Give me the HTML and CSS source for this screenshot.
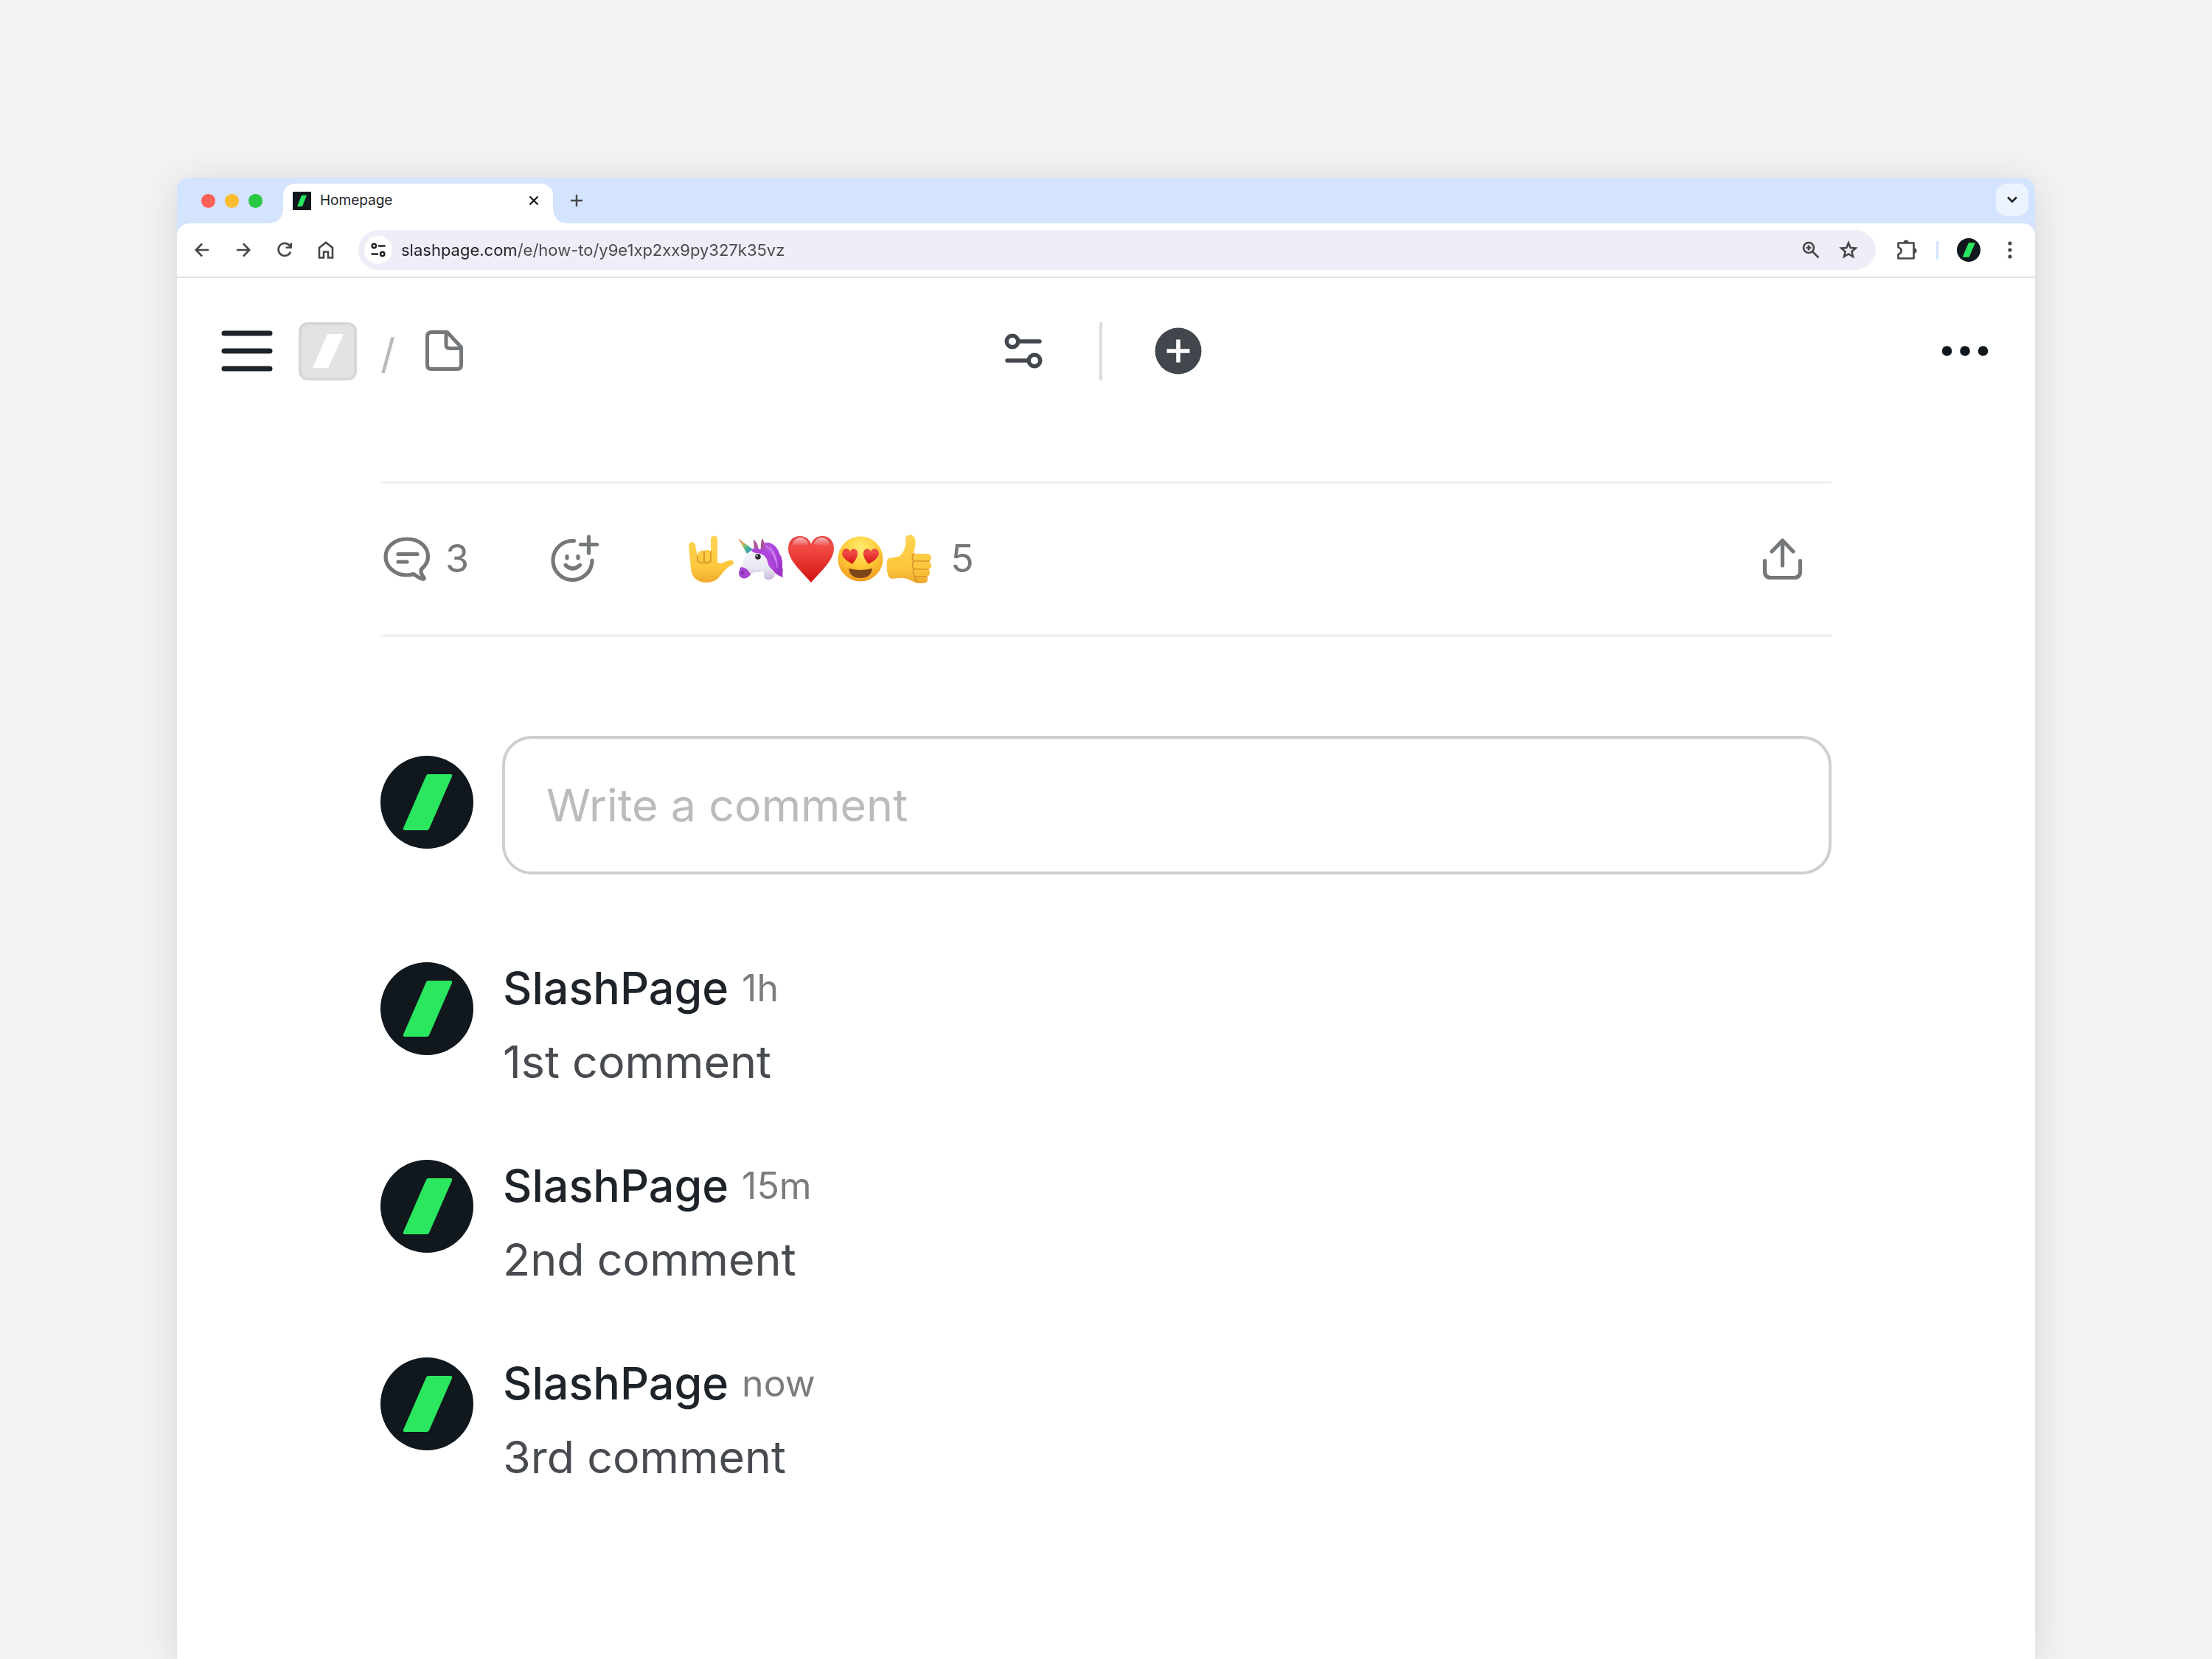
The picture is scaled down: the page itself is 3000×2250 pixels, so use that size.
FILE: index.html
```html
<!DOCTYPE html>
<html lang="en">
<head>
<meta charset="utf-8">
<title>Homepage</title>
<link rel="stylesheet" href="styles.css">
</head>
<body>
<svg class="sprite" aria-hidden="true">
  <defs>
    <linearGradient id="skin" x1="0" y1="0" x2="0" y2="1"><stop offset="0" stop-color="#ffd452"/><stop offset=".7" stop-color="#fdc63c"/><stop offset="1" stop-color="#efa92f"/></linearGradient>
    <linearGradient id="red" x1="0" y1="0" x2="0" y2="1"><stop offset="0" stop-color="#e5403e"/><stop offset=".25" stop-color="#f24a46"/><stop offset="1" stop-color="#d3120f"/></linearGradient>
    <linearGradient id="gloss" x1="0" y1="0" x2="0" y2="1"><stop offset="0" stop-color="#fff" stop-opacity=".65"/><stop offset="1" stop-color="#fff" stop-opacity="0"/></linearGradient>
    <linearGradient id="horn" x1="0" y1="0" x2="1" y2="1"><stop offset="0" stop-color="#e8706a"/><stop offset=".35" stop-color="#d9b65a"/><stop offset=".6" stop-color="#43b98c"/><stop offset="1" stop-color="#3f7fe0"/></linearGradient>
    <linearGradient id="mane" x1="0" y1="0" x2="1" y2="1"><stop offset="0" stop-color="#b956e8"/><stop offset="1" stop-color="#9a2fc6"/></linearGradient>
    <linearGradient id="coat" x1="0" y1="0" x2="0" y2="1"><stop offset="0" stop-color="#f6f6fb"/><stop offset=".6" stop-color="#e9e8f3"/><stop offset="1" stop-color="#c9b8da"/></linearGradient>
    <radialGradient id="face" cx=".5" cy=".25" r=".8"><stop offset="0" stop-color="#ffec6e"/><stop offset=".5" stop-color="#ffcb38"/><stop offset="1" stop-color="#f0941c"/></radialGradient>
  </defs>
  <symbol id="logo" viewBox="0 0 126 126"><circle cx="63" cy="63" r="63" fill="#10171d"/><path d="M65 25H95Q98 25 97 28L66 99Q65 101 63 101H33Q30 101 31 98L62 27Q63 25 65 25Z" fill="#2ae75f"/></symbol>
</svg>

<main class="window">
  <header class="tabstrip">
    <div class="lights"><i class="light red"></i><i class="light amber"></i><i class="light green"></i></div>
    <div class="tab">
      <svg class="favicon" viewBox="0 0 25 25"><path d="M0 0h25v25H0z" fill="#10171d"/><path d="M12 5h7l-6 15H6z" fill="#2ae75f"/></svg>
      <span class="tab-title">Homepage</span>
      <button class="plain tab-close" aria-label="Close tab"><svg width="14" height="14" viewBox="0 0 14 14" fill="none" stroke="#1f2023" stroke-width="2.400"><path d="M1.500 1.500l11 11M12.500 1.500l-11 11"/></svg></button>
    </div>
    <button class="plain tab-new" aria-label="New tab"><svg width="18" height="18" viewBox="0 0 18 18" fill="none" stroke="#474747" stroke-width="2.400"><path d="M9 1v16M1 9h16"/></svg></button>
    <button class="plain tab-search" aria-label="Search tabs"><svg width="16" height="12" viewBox="0 0 16 12" fill="none" stroke="#1f2023" stroke-width="2.600"><path d="M2 2.500l6 6 6-6"/></svg></button>
  </header>

  <div class="toolbar">
    <nav class="nav">
      <button class="plain tool" aria-label="Back"><svg width="20" height="20" viewBox="0 0 20 20" fill="none" stroke="#474747" stroke-width="2.600"><path d="M19 10H2M10 1.500L1.800 10l8.200 8.500"/></svg></button>
      <button class="plain tool" aria-label="Forward"><svg width="20" height="20" viewBox="0 0 20 20" fill="none" stroke="#474747" stroke-width="2.600"><path d="M1 10h17M10 1.500l8.200 8.500-8.200 8.500"/></svg></button>
      <button class="plain tool" aria-label="Reload"><svg width="22" height="22" viewBox="0 0 22 22" fill="none" stroke="#474747" stroke-width="2.600"><path d="M18.500 6.200A8.500 8.500 0 1 0 19 13.500M19.700 1.500v6.300h-7"/></svg></button>
      <button class="plain tool" aria-label="Home"><svg width="22" height="24" viewBox="0 0 22 24" fill="none" stroke="#474747" stroke-width="2.600"><path d="M2 9l9-7 9 7v13.500h-6v-8H8v8H2z"/></svg></button>
    </nav>
    <div class="address">
      <button class="plain site-info" aria-label="View site information"><svg width="20" height="20" viewBox="0 0 20 20" fill="none" stroke="#1f2023" stroke-width="2.400"><circle cx="4.300" cy="4.500" r="2.700"/><circle cx="15.700" cy="15.500" r="2.700"/><path d="M10 4.500h9.500M.5 15.500H10"/></svg></button>
      <input class="url" type="text" aria-label="Address" value="slashpage.com/e/how-to/y9e1xp2xx9py327k35vz">
      <button class="plain pill-tool" aria-label="Zoom"><svg width="24" height="24" viewBox="0 0 24 24" fill="none" stroke="#474747" stroke-width="2.600"><circle cx="9" cy="9" r="7"/><path d="M14 14l8.500 8.500M9 5.500v7M5.500 9h7"/></svg></button>
      <button class="plain pill-tool" aria-label="Bookmark"><svg width="26" height="26" viewBox="0 0 26 26" fill="none" stroke="#474747" stroke-width="2.600"><path d="M13 3.500l2.700 6.500 7 .6-5.300 4.600 1.600 6.800-6-3.600-6 3.600 1.600-6.800-5.300-4.600 7-.6z"/></svg></button>
    </div>
    <button class="plain tool" aria-label="Extensions"><svg width="28" height="28" viewBox="0 0 28 28" fill="none" stroke="#474747" stroke-width="2.600" stroke-linejoin="round"><path d="M2.500 4.500H23.500V25.500H2.500V20C8 18 8 12 2.500 10.500Z"/><path d="M9.500 4a3.500 3.500 0 0 1 7 0zM24 11.500a3.500 3.500 0 0 1 0 7z" fill="#474747" stroke="none"/></svg></button>
    <span class="tool-divider"></span>
    <button class="plain profile" aria-label="Profile"><svg width="32" height="32"><use href="#logo"/></svg></button>
    <button class="plain tool" aria-label="Browser menu"><svg width="6" height="24" viewBox="0 0 6 24" fill="#474747"><circle cx="3" cy="3" r="2.600"/><circle cx="3" cy="12" r="2.600"/><circle cx="3" cy="21" r="2.600"/></svg></button>
  </div>

  <div class="appbar">
    <div class="crumbs">
      <button class="plain" aria-label="Menu"><svg width="70" height="56" viewBox="0 0 70 56" fill="none" stroke="#1d2329" stroke-width="7" stroke-linecap="round"><path d="M4 4h62M4 28h62M4 52h62"/></svg></button>
      <a class="site-logo" href="#" aria-label="Site"><svg width="42" height="46" viewBox="0 0 42 46"><path d="M20 0H42L21 46H0Z" fill="#fff"/></svg></a>
      <span class="slash">/</span>
      <a class="page-link" href="#" aria-label="Page"><svg width="54" height="58" viewBox="0 0 54 58" fill="none" stroke="#75787a" stroke-width="5" stroke-linejoin="round"><path d="M9.500 3.500H30.500L49.500 24V48Q49.500 53.500 44 53.500H9Q3.500 53.500 3.500 48V9.500Q3.500 3.500 9.500 3.500Z"/><path d="M29 4v16.500Q29 25.500 34 25.500H49"/></svg></a>
    </div>
    <div class="actions">
      <button class="plain round" aria-label="Settings"><svg width="52" height="48" viewBox="0 0 52 48" fill="none" stroke="#42474d" stroke-width="5.400" stroke-linecap="round"><circle cx="11" cy="11" r="7.800"/><path d="M21 11h27M4 37h27"/><circle cx="41" cy="37" r="7.800"/></svg></button>
      <span class="divider"></span>
      <button class="plain round" aria-label="Add"><svg width="64" height="64" viewBox="0 0 64 64"><circle cx="32" cy="32" r="31.500" fill="#42474d"/><path d="M32 16.500v31M16.500 32h31" stroke="#fff" stroke-width="5.600"/></svg></button>
    </div>
    <button class="plain more" aria-label="More"><svg width="64" height="16" viewBox="0 0 64 16" fill="#10171d"><circle cx="7.500" cy="8" r="6.800"/><circle cx="32" cy="8" r="6.800"/><circle cx="56.500" cy="8" r="6.800"/></svg></button>
  </div>

  <section class="content">
    <div class="reactions">
      <button class="plain count"><svg width="64" height="62" viewBox="0 0 64 62" fill="none" stroke="#75787a" stroke-width="5.200" stroke-linecap="round" stroke-linejoin="round"><path d="M41 51.500C38 52.500 35 53 32 53C16 53 3 42 3 28S16 4 32 4S60.500 14 60.500 28C60.500 35 56 41 51.500 45C50 49 52 53 55 56.500Q56 58.500 53.500 58.300C49 57.500 45 54.500 41 51.500Z"/><path d="M20 24.500h26M20 35h12"/></svg>3</button>
      <button class="plain" aria-label="Add reaction"><svg width="66" height="66" viewBox="0 0 66 66" fill="none" stroke="#75787a" stroke-width="5.200" stroke-linecap="round"><path d="M31.500 8.600A26.500 26.500 0 1 0 56 35"/><path d="M51.500 3v22M40.500 13.500h22M22 29.500v2.500M37 29.500v2.500"/><path d="M20 41.500Q29.500 50.500 39.500 41.500"/></svg></button>
      <button class="plain emojis" aria-label="5 reactions">
        <svg class="emoji" viewBox="0 0 64 68"><path d="M0 16C0 10 8 9 9 15L12 31C12 24 16 22 21 23Q26 20 30 24V7C30 1 39 1 39 7V39C44 42 50 37 55 36C61 35 63 40 59 42C51 46 47 52 42 58C37 64 31 66 24 66C11 66 3 58 3 46Z" fill="url(#skin)"/><path d="M12 30v6q4 6 9 2 4 4 9-1V24M21 24v13" fill="none" stroke="#d9952b" stroke-width="1.800" stroke-linecap="round"/></svg>
        <svg class="emoji" viewBox="0 0 64 68"><path d="M36 12C46 10 54 18 56 27C61 33 60 41 60 46C62 51 59 54 61 59C54 57 49 52 44 47L30 26Z" fill="url(#mane)"/><path d="M11 29C16 22 26 20 33 24C40 28 44 36 41 42C44 48 52 51 50 57C47 62 41 64 37 61C34 58 36 53 34 51C28 53 23 50 17 55C13 62 2 61 1 53C0 49 4 45 6 40C8 36 9 32 11 29Z" fill="url(#coat)"/><path d="M4 45Q12 45 17 55Q13 62 5 60Q-1 56 2 49Z" fill="#a743cf"/><path d="M0 6L20 21L12 27Z" fill="url(#horn)"/><path d="M22 24L21 8Q27 11 28 24ZM31 24Q30 11 33 6Q38 15 36 26Z" fill="#ad5598"/><path d="M18 23Q22 16 29 21Q34 18 38 24Q46 27 46 37Q51 42 49 49Q42 46 40 38Q38 28 27 26Q22 27 18 23Z" fill="#ae45db"/><path d="M43 18q9 9 10 27M38 17q8 4 14 22" fill="none" stroke="#d184f2" stroke-width="1.500" stroke-linecap="round"/><circle cx="27" cy="31" r="3.800" fill="#25252e"/><circle cx="26" cy="30" r="1" fill="#fff"/><ellipse cx="6" cy="53" rx="1.500" ry="2.200" fill="#74268d"/></svg>
        <svg class="emoji" viewBox="0 0 64 68"><path d="M32 66C19 51 1 36 1 20C1 8 9 3 17 3C25 3 30 8 32 14C34 8 39 3 47 3C56 3 63 9 63 20C63 36 45 51 32 66Z" fill="url(#red)"/><path d="M17 5C23 5 27 9 29 14Q20 19 6 16Q8 6 17 5ZM47 5C41 5 37 9 35 14Q44 19 58 16Q56 6 47 5Z" fill="url(#gloss)"/></svg>
        <svg class="emoji" viewBox="0 0 64 68"><circle cx="32" cy="34" r="30.500" fill="url(#face)"/><path d="M21 41C14 37 8 33 7 27C7 19 16 18 18 24C21 18 29 20 28 28C27 34 24 37 21 41Z" fill="url(#red)"/><path d="M43 41C50 37 56 33 57 27C57 19 48 18 46 24C43 18 35 20 36 28C37 34 40 37 43 41Z" fill="url(#red)"/><path d="M16 47Q32 51 48 47Q46 60 32 60Q18 60 16 47Z" fill="#7d4518"/></svg>
        <svg class="emoji" viewBox="0 0 64 68"><path d="M2 34C8 31 17 33 21 27C26 21 27 13 26 6C28-1 37 0 39 7C41 15 38 21 37 27H55C62 27 63 35 58 38C63 41 62 47 57 48C61 52 59 57 55 58C58 62 55 67 50 67H43C36 66 33 61 23 60C15 59 8 63 4 59C0 53 0 39 2 34Z" fill="url(#skin)"/><path d="M38 27Q33 30 37 37H58M37 37Q34 43 37 48H57M37 48Q35 54 39 58H55M39 58Q38 63 43 66" fill="none" stroke="#d9952b" stroke-width="1.700" stroke-linecap="round"/></svg>
        <span class="total">5</span>
      </button>
      <button class="plain share" aria-label="Share"><svg width="55" height="58" viewBox="0 0 55 58" fill="none" stroke="#75787a" stroke-width="5.200" stroke-linecap="round" stroke-linejoin="round"><path d="M27.500 38V4M13 19L27.500 4L42 19M3.500 31.500V46Q3.500 54.500 12 54.500H43Q51.500 54.500 51.500 46V31.500"/></svg></button>
    </div>

    <form class="composer">
      <svg class="avatar"><use href="#logo"/></svg>
      <input class="comment-box" type="text" placeholder="Write a comment" aria-label="Write a comment">
    </form>

    <div class="comments">
      <article class="comment">
        <svg class="avatar"><use href="#logo"/></svg>
        <div><p class="byline"><strong class="author">SlashPage</strong><time class="time">1h</time></p><p class="text">1st comment</p></div>
      </article>
      <article class="comment">
        <svg class="avatar"><use href="#logo"/></svg>
        <div><p class="byline"><strong class="author">SlashPage</strong><time class="time">15m</time></p><p class="text">2nd comment</p></div>
      </article>
      <article class="comment">
        <svg class="avatar"><use href="#logo"/></svg>
        <div><p class="byline"><strong class="author">SlashPage</strong><time class="time">now</time></p><p class="text">3rd comment</p></div>
      </article>
    </div>
  </section>
</main>
</body>
</html>
```
FILE: styles.css
```css
* { box-sizing: border-box; }

body {
  margin: 0;
  min-height: 100vh;
  padding: 241px 8% 0;
  display: flex;
  flex-direction: column;
  background: #f3f3f3;
  font-family: Inter, "Liberation Sans", sans-serif;
  color: #1d2329;
}

.sprite { position: absolute; width: 0; height: 0; }
svg { display: block; flex: none; }

.plain {
  border: 0;
  padding: 0;
  background: none;
  font: inherit;
  color: inherit;
  display: flex;
  align-items: center;
  justify-content: center;
  flex: none;
}

.window {
  flex: 1;
  background: #fff;
  border-radius: 16px 16px 0 0;
  box-shadow: 0 8px 60px rgba(0, 0, 0, 0.12);
}

/* Tab strip */
.tabstrip {
  display: flex;
  height: 78px;
  padding: 8px 9px 16px 33px;
  margin-bottom: -16px;
  background: #d4e3fe;
  border-radius: 16px 16px 0 0;
}
.lights { display: flex; gap: 13px; align-items: center; height: 46px; }
.light { width: 19px; height: 19px; border-radius: 50%; }
.red { background: #fe5f57; }
.amber { background: #febb2e; }
.green { background: #28c840; }

.tab {
  position: relative;
  display: flex;
  align-items: center;
  width: 366px;
  height: 54px;
  margin-left: 28px;
  padding: 0 19px 8px 13px;
  background: #fff;
  border-radius: 16px 16px 0 0;
}
/* Flared feet where the tab meets the toolbar */
.tab::before, .tab::after {
  content: "";
  position: absolute;
  bottom: 0;
  width: 18px;
  height: 18px;
}
.tab::before { right: 100%; background: radial-gradient(circle at 0 0, transparent 17px, #fff 18px); }
.tab::after { left: 100%; background: radial-gradient(circle at 100% 0, transparent 17px, #fff 18px); }
.favicon { width: 25px; height: 25px; }
.tab-title { flex: 1; padding-left: 12px; font-size: 19px; line-height: 24px; }
.tab-new { width: 44px; height: 46px; margin-left: 10px; }
.tab-search { width: 44px; height: 44px; margin-left: auto; border-radius: 14px; background: #ecf2fe; }

/* Toolbar */
.toolbar {
  position: relative;
  display: flex;
  align-items: center;
  height: 74px;
  padding: 0 6px;
  background: #fff;
  border-bottom: 2px solid #e2e2e4;
  border-radius: 16px 16px 0 0;
}
.nav { display: flex; }
.tool { width: 57px; height: 54px; }
.nav .tool { width: 56px; }
.address {
  flex: 1;
  display: flex;
  align-items: center;
  height: 54px;
  margin: 0 13px 0 16px;
  padding: 0 12px 0 8px;
  background: #eeeef8;
  border-radius: 27px;
}
.site-info { width: 38px; height: 38px; border-radius: 50%; background: #fff; }
.url {
  flex: 1;
  min-width: 0;
  height: 38px;
  margin-left: 12px;
  padding: 0;
  border: 0;
  outline: 0;
  font: 22px/38px Inter, "Liberation Sans", sans-serif;
  color: #474747;
  /* The host is darker than the path */
  background: linear-gradient(to right, #1f2023 156px, #474747 156px);
  background-clip: text;
  -webkit-background-clip: text;
  -webkit-text-fill-color: transparent;
}
.pill-tool { width: 51px; height: 54px; }
.tool-divider { width: 3px; height: 25px; margin: 0 25px 0 12px; border-radius: 2px; background: #d4e3fe; }
.profile { margin-right: 11px; }

/* App bar */
.appbar {
  display: grid;
  grid-template-columns: 1fr auto 1fr;
  align-items: center;
  height: 198px;
  padding: 0 59px 0 60px;
}
.crumbs { display: flex; align-items: center; }
.site-logo {
  display: grid;
  place-items: center;
  width: 79px;
  height: 79px;
  margin-left: 35px;
  border: 4px solid #d7d7d7;
  border-radius: 12px;
  background: #e3e3e3;
}
.slash { padding: 8px 0 0 32px; font-size: 56px; line-height: 64px; color: #b8b9ba; }
.page-link { margin-left: 40px; }
.actions { display: flex; align-items: center; padding-right: 16px; }
.round { width: 64px; height: 64px; }
.divider { width: 4px; height: 79px; margin: 0 71px; background: #dcdcdc; }
.more { justify-self: end; width: 72px; height: 64px; }

/* Article footer and comments */
.content { padding: 77px 276px 0; }
.reactions {
  display: flex;
  align-items: center;
  height: 212px;
  padding: 0 39px 0 4px;
  border: solid #f2f2f2;
  border-width: 4px 0;
  font-size: 52px;
  line-height: 64px;
  color: #75787a;
}
.count { gap: 20px; margin-right: 111px; }
.emojis { gap: 3px; margin-left: 121px; }
.emoji { width: 64px; height: 68px; }
.total { margin-left: 20px; }
.share { margin-left: auto; }

.composer { display: flex; gap: 39px; margin-top: 134px; }
.avatar { width: 126px; height: 126px; }
.composer .avatar { margin-top: 27px; }
.comment-box {
  flex: 1;
  min-width: 0;
  height: 188px;
  padding: 0 56px;
  border: 4px solid #cfcfcf;
  border-radius: 40px;
  outline: 0;
  background: #fff;
  font: 61px/80px Inter, "Liberation Sans", sans-serif;
  color: #1d2329;
}
.comment-box::placeholder { color: #b9bbbc; opacity: 1; }

.comments { display: flex; flex-direction: column; gap: 68px; margin-top: 103px; }
.comment { display: flex; gap: 40px; }
.comment .avatar { margin-top: 16px; }
.byline, .text { margin: 0; height: 100px; line-height: 102px; font-size: 61px; }
.byline { display: flex; gap: 18px; }
.author { font-weight: 500; }
.time { font-size: 50px; color: #7a7c7e; }
.text { color: #474b4f; }
```
